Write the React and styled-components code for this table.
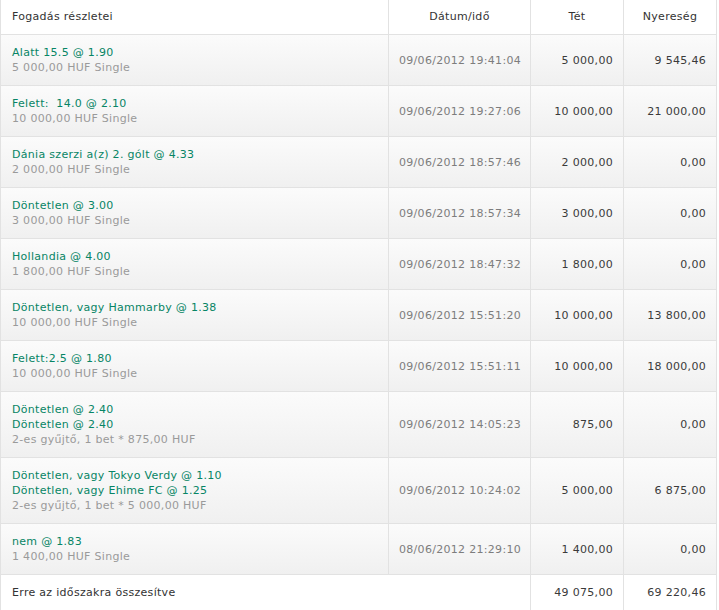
import React from "react";
import styled, { createGlobalStyle } from "styled-components";

const Global = createGlobalStyle`
  html, body { margin: 0; padding: 0; background: #fff; }
  body { font-family: "DejaVu Sans", Verdana, sans-serif; font-size: 11px; letter-spacing: 0.3px; }
`;

const Table = styled.div`
  width: 717px;
  box-sizing: border-box;
  border-left: 1px solid #e2e2e2;
  border-right: 1px solid #e2e2e2;
`;

const Row = styled.div`
  display: grid;
  grid-template-columns: ${(p) => (p.$footer ? "530px 93px 92px" : "388px 142px 93px 92px")};
  border-bottom: 1px solid #e2e2e2;
  background: ${(p) =>
    p.$plain ? "#fff" : "linear-gradient(to bottom, #fbfbfb 0%, #f0f0f0 100%)"};
`;

const Cell = styled.div`
  box-sizing: border-box;
  border-right: ${(p) => (p.$last ? "none" : "1px solid #e2e2e2")};
  padding: ${(p) => (p.$head ? "9px 10px 10px" : "10px")};
  padding-left: ${(p) => (p.$first ? "11px" : "10px")};
  line-height: 15px;
  display: flex;
  flex-direction: column;
  justify-content: center;
  text-align: ${(p) => p.$align || "left"};
  color: ${(p) => p.$color || "#333"};
  white-space: pre;
`;

const Pick = styled.div`
  color: #078565;
`;

const Sub = styled.div`
  color: #9a9a9a;
`;

const rows = [
  { picks: ["Alatt 15.5 @ 1.90"], sub: "5 000,00 HUF Single", date: "09/06/2012 19:41:04", stake: "5 000,00", win: "9 545,46" },
  { picks: ["Felett:  14.0 @ 2.10"], sub: "10 000,00 HUF Single", date: "09/06/2012 19:27:06", stake: "10 000,00", win: "21 000,00" },
  { picks: ["Dánia szerzi a(z) 2. gólt @ 4.33"], sub: "2 000,00 HUF Single", date: "09/06/2012 18:57:46", stake: "2 000,00", win: "0,00" },
  { picks: ["Döntetlen @ 3.00"], sub: "3 000,00 HUF Single", date: "09/06/2012 18:57:34", stake: "3 000,00", win: "0,00" },
  { picks: ["Hollandia @ 4.00"], sub: "1 800,00 HUF Single", date: "09/06/2012 18:47:32", stake: "1 800,00", win: "0,00" },
  { picks: ["Döntetlen, vagy Hammarby @ 1.38"], sub: "10 000,00 HUF Single", date: "09/06/2012 15:51:20", stake: "10 000,00", win: "13 800,00" },
  { picks: ["Felett:2.5 @ 1.80"], sub: "10 000,00 HUF Single", date: "09/06/2012 15:51:11", stake: "10 000,00", win: "18 000,00" },
  { picks: ["Döntetlen @ 2.40", "Döntetlen @ 2.40"], sub: "2-es gyűjtő, 1 bet * 875,00 HUF", date: "09/06/2012 14:05:23", stake: "875,00", win: "0,00" },
  { picks: ["Döntetlen, vagy Tokyo Verdy @ 1.10", "Döntetlen, vagy Ehime FC @ 1.25"], sub: "2-es gyűjtő, 1 bet * 5 000,00 HUF", date: "09/06/2012 10:24:02", stake: "5 000,00", win: "6 875,00" },
  { picks: ["nem @ 1.83"], sub: "1 400,00 HUF Single", date: "08/06/2012 21:29:10", stake: "1 400,00", win: "0,00" },
];

export default function App() {
  return (
    <>
      <Global />
      <Table>
        <Row $plain>
          <Cell $head $first>Fogadás részletei</Cell>
          <Cell $head $align="center">Dátum/idő</Cell>
          <Cell $head $align="center">Tét</Cell>
          <Cell $head $last $align="center">Nyereség</Cell>
        </Row>
        {rows.map((r, i) => (
          <Row key={i}>
            <Cell $first>
              {r.picks.map((p, j) => (
                <Pick key={j}>{p}</Pick>
              ))}
              <Sub>{r.sub}</Sub>
            </Cell>
            <Cell $align="center" $color="#7d7d7d">{r.date}</Cell>
            <Cell $align="right" $color="#3a3a3a">{r.stake}</Cell>
            <Cell $last $align="right" $color="#3a3a3a">{r.win}</Cell>
          </Row>
        ))}
        <Row $plain $footer>
          <Cell $first>Erre az időszakra összesítve</Cell>
          <Cell $align="right" $color="#3a3a3a">49 075,00</Cell>
          <Cell $last $align="right" $color="#3a3a3a">69 220,46</Cell>
        </Row>
      </Table>
    </>
  );
}
